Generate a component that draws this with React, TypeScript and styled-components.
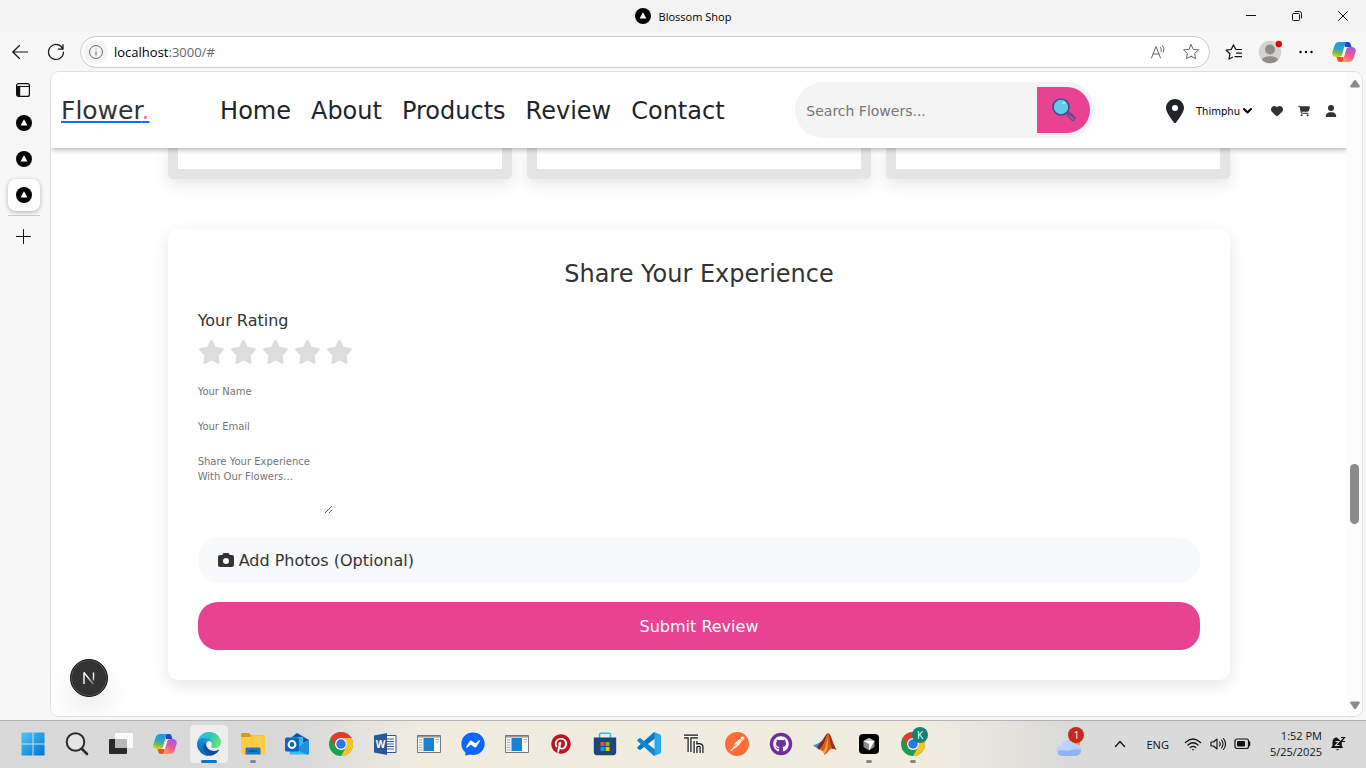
import React from "react";
import styled, { createGlobalStyle, css } from "styled-components";
import { FaPinterest, FaGithub, FaFacebookMessenger } from "react-icons/fa";
import {
  FaStar,
  FaHeart,
  FaCartShopping,
  FaUser,
  FaCamera,
  FaLocationDot,
} from "react-icons/fa6";
import { SiPostman } from "react-icons/si";

const pink = "#e84393";
const ink = "#212529";
const uiFont = `"Open Sans", "Noto Sans", sans-serif`;
const pageFont = `"DejaVu Sans", "Liberation Sans", sans-serif`;

const GlobalStyle = createGlobalStyle`
  *, *::before, *::after { box-sizing: border-box; }
  body { margin: 0; background: #f7f7f7; color: #000; font-family: ${uiFont}; }
  button, input, select, textarea { font: inherit; margin: 0; }
  button { border: 0; padding: 0; background: none; color: inherit; }
  svg { display: block; flex: none; }
`;

/* ---------- window frame ---------- */

const Window = styled.div`
  display: flex;
  flex-direction: column;
  min-height: 100vh;
`;

const TitleBar = styled.header`
  display: grid;
  grid-template-columns: 1fr auto 1fr;
  align-items: center;
  height: 32px;
  background: #f3f3f3;
  font-size: 11px;
`;

const WindowTitle = styled.div`
  display: flex;
  align-items: center;
  gap: 8px;
  grid-column: 2;
`;

const WindowButtons = styled.div`
  display: flex;
  justify-content: flex-end;
`;

const WindowButton = styled.button`
  display: grid;
  place-items: center;
  width: 46px;
  height: 32px;
`;

const Toolbar = styled.div`
  display: flex;
  align-items: center;
  height: 39px;
  padding: 0 2px 0 8px;
`;

const ToolButton = styled.button<{ $w?: number }>`
  display: grid;
  place-items: center;
  position: relative;
  width: ${(p) => p.$w ?? 36}px;
  height: 32px;
`;

const AddressBar = styled.div`
  display: flex;
  align-items: center;
  flex: 1;
  height: 32px;
  margin: 1px 6px 0 0;
  padding: 0 2px 0 3px;
  border: 1px solid #cdcdcd;
  border-radius: 16px;
  background: #fff;
`;

const SiteInfo = styled.button`
  display: grid;
  place-items: center;
  width: 24px;
  height: 24px;
  border-radius: 50%;
  background: #f3f3f3;
`;

const Address = styled.div`
  flex: 1;
  margin-left: 6px;
  font-size: 13px;
  line-height: 20px;
  span { color: #666; }
`;

const Body = styled.div`
  display: flex;
  flex: 1;
  padding: 0 3px 3px 0;
`;

const TabRail = styled.nav`
  display: flex;
  flex-direction: column;
  align-items: center;
  width: 50px;
  padding: 3px 3px 0 0;
`;

const RailTab = styled.button<{ $active?: boolean }>`
  display: grid;
  place-items: center;
  width: 32px;
  height: 32px;
  margin-bottom: 4px;
  border-radius: 8px;
  ${(p) =>
    p.$active &&
    css`
      background: #fff;
      box-shadow: 0 1px 4px rgba(0, 0, 0, 0.3);
    `}
`;

const TabActions = styled(RailTab)`
  width: 34px;
  margin-bottom: 1px;
  padding-right: 2px;
`;

const RailRule = styled.hr`
  width: 32px;
  margin: 0 0 4px;
  border: 0;
  border-top: 1px solid #c8c8c8;
`;

const Viewport = styled.div`
  position: relative;
  display: flex;
  flex: 1;
  overflow: hidden;
  border: 1px solid #e0e0e0;
  border-radius: 9px;
  background: #fff;
`;

const ScrollTrack = styled.div`
  display: flex;
  flex-direction: column;
  align-items: center;
  width: 15px;
  padding: 8px 0 7px;
  background: #fcfcfc;
`;

const ScrollThumb = styled.div`
  width: 9px;
  height: 60px;
  border-radius: 5px;
  background: #8b8b8b;
`;

const ScrollSpace = styled.div<{ $grow: number }>`
  flex: ${(p) => p.$grow} 0 0;
`;

/* ---------- shop page ---------- */

const Page = styled.div`
  flex: 1;
  min-width: 0;
  overflow-x: clip;
  font-family: ${pageFont};
  color: ${ink};
`;

const ShopHeader = styled.header`
  position: relative;
  z-index: 1;
  display: flex;
  align-items: center;
  justify-content: space-between;
  height: 76px;
  padding: 0 10px;
  background: #fff;
  box-shadow: 0 2px 5px rgba(0, 0, 0, 0.28);
`;

const Brand = styled.a`
  padding-top: 2px;
  font-size: 25px;
  line-height: 36px;
  color: #333;
  text-decoration: underline #0d6efd;
  span { color: #ff69b4; }
`;

const MainNav = styled.nav`
  display: flex;
  gap: 20px;
  padding-top: 2px;
  font-size: 24px;
  line-height: 36px;
`;

const NavLink = styled.a`
  color: ${ink};
  text-decoration: none;
`;

const SearchForm = styled.form`
  display: flex;
  width: 300px;
  height: 56px;
  padding: 5px;
  border-radius: 30px;
  background: #f4f4f4;
`;

const SearchInput = styled.input`
  flex: 1;
  min-width: 0;
  padding: 2px 6px 0;
  border: 0;
  background: transparent;
  font-size: 14px;
  &::placeholder { color: #757575; }
`;

const SearchButton = styled.button`
  display: grid;
  place-items: center;
  width: 53px;
  border-radius: 0 24px 24px 0;
  background: ${pink};
`;

const HeaderTools = styled.div`
  display: flex;
  align-items: center;
  padding-top: 2px;
`;

const PlaceSelect = styled.select`
  appearance: none;
  width: 46px;
  margin-left: 12px;
  padding: 0;
  border: 0;
  background: #fff;
  color: #000;
  font-size: 10px;
`;

const IconLinks = styled.div`
  display: flex;
  gap: 15px;
  margin-left: 18px;
`;

const IconLink = styled.a`
  color: #333;
`;

const PinIcon = styled(FaLocationDot)`
  width: 18px;
  height: 24px;
`;

const Content = styled.main`
  padding: 0 9% 30px;
`;

const ReviewCards = styled.div`
  display: grid;
  grid-template-columns: repeat(3, 1fr);
  gap: 15px;
  margin-bottom: 50px;
`;

const ReviewCard = styled.article`
  height: 31px;
  border: 10px solid #e5e5e5;
  border-top: 0;
  border-radius: 0 0 5px 5px;
  box-shadow: 0 5px 15px rgba(0, 0, 0, 0.1);
`;

const ReviewForm = styled.form`
  display: flex;
  flex-direction: column;
  align-items: flex-start;
  padding: 30px;
  border-radius: 10px;
  background: #fff;
  box-shadow: 0 5px 15px rgba(0, 0, 0, 0.1);
`;

const FormTitle = styled.h3`
  align-self: center;
  margin: 0 0 18px;
  font-size: 24px;
  font-weight: 400;
  line-height: 31px;
  color: #333;
`;

const Rating = styled.fieldset`
  margin: 0 0 20px;
  padding: 0;
  border: 0;
  legend {
    margin-bottom: 6px;
    padding: 0;
    font-size: 16px;
    line-height: 26px;
    color: #333;
  }
`;

const Stars = styled.div`
  display: flex;
  gap: 5px;
  color: #ddd;
`;

const StarIcon = styled(FaStar)`
  width: 27px;
  height: 24px;
`;

const Hidden = styled.input`
  appearance: none;
  position: absolute;
  width: 1px;
  height: 1px;
  margin: 0;
  opacity: 0;
`;

const fieldText = css`
  padding: 0;
  border: 0;
  background: transparent;
  font-size: 10px;
  line-height: 15px;
  &::placeholder { color: #757575; }
`;

const Field = styled.input`
  ${fieldText}
  width: 136px;
  height: 15px;
  margin-bottom: 20px;
`;

const MessageField = styled.textarea`
  ${fieldText}
  width: 135px;
  height: 60px;
  margin-bottom: 24px;
`;

const PhotoPicker = styled.label`
  display: flex;
  align-items: center;
  gap: 5px;
  width: 100%;
  height: 44px;
  margin-bottom: 20px;
  padding: 0 20px;
  border-radius: 20px;
  background: #f8f9fb;
  color: #333;
  font-size: 16px;
`;

const SubmitButton = styled.button`
  width: 100%;
  height: 48px;
  border-radius: 20px;
  background: ${pink};
  color: #fff;
  font-size: 16px;
`;

const DevBadge = styled.button`
  position: absolute;
  left: 19px;
  bottom: 19px;
  display: grid;
  place-items: center;
  width: 38px;
  height: 38px;
  border: 1px solid #111;
  border-radius: 50%;
  background: #333;
  box-shadow: inset 0 0 0 1px #555, 0 16px 32px -8px rgba(0, 0, 0, 0.24);
`;

/* ---------- taskbar ---------- */

const Taskbar = styled.footer`
  display: flex;
  align-items: center;
  justify-content: space-between;
  height: 48px;
  padding: 0 20px 0 14px;
  box-shadow: inset 0 1px #b4b4b4;
  background: linear-gradient(
    90deg,
    #d9d9d9 0 22%,
    #f0ece0 31%,
    #f0ece0 68%,
    #dadada 78%
  );
`;

const AppRow = styled.div`
  display: flex;
  gap: 6px;
`;

const AppButton = styled.button<{ $state?: "active" | "running" }>`
  display: grid;
  place-items: center;
  position: relative;
  width: 38px;
  height: 38px;
  border-radius: 4px;
  background: ${(p) => (p.$state === "active" ? "#eeeeee" : "none")};
  &::after {
    content: ${(p) => (p.$state ? '""' : "none")};
    position: absolute;
    bottom: 0;
    width: ${(p) => (p.$state === "active" ? 16 : 6)}px;
    height: 3px;
    border-radius: 2px;
    background: ${(p) => (p.$state === "active" ? "#0078d4" : "#858585")};
  }
`;

const Badge = styled.span<{ $color: string }>`
  position: absolute;
  top: 2px;
  right: 4px;
  width: 16px;
  height: 16px;
  border-radius: 50%;
  background: ${(p) => p.$color};
  color: #fff;
  font-size: 10px;
  line-height: 16px;
  text-align: center;
`;

const WeatherButton = styled(AppButton)`
  margin-right: 18px;
`;

const Tray = styled.div`
  display: flex;
  align-items: center;
  gap: 8px;
  font-size: 11px;
  color: #111;
`;

const TrayText = styled.span`
  margin: 0 7px 0 12px;
`;

const Clock = styled.time`
  margin-left: 10px;
  line-height: 16px;
  text-align: right;
`;

/* ---------- drawings ---------- */

const Favicon = () => (
  <svg width="16" height="16" viewBox="0 0 16 16">
    <circle cx="8" cy="8" r="8" fill="#000" />
    <path d="M8 4.2 11.4 10.6H4.6z" fill="#fff" />
  </svg>
);

const Line: React.FC<{ w?: number; h?: number; d: string; color?: string; sw?: number }> = ({
  w = 16,
  h = 16,
  d,
  color = "#111",
  sw = 1,
}) => (
  <svg width={w} height={h} viewBox={`0 0 ${w} ${h}`} fill="none" stroke={color} strokeWidth={sw} strokeLinecap="round" strokeLinejoin="round">
    <path d={d} />
  </svg>
);

const Copilot = () => (
  <svg width="24" height="24" viewBox="0 0 24 24">
    <defs>
      <linearGradient id="cpA" x1="0.4" y1="0" x2="0.2" y2="1">
        <stop offset="0" stopColor="#1b9bf0" />
        <stop offset="0.45" stopColor="#2fa8c0" />
        <stop offset="0.7" stopColor="#6cc04a" />
        <stop offset="1" stopColor="#f8cf12" />
      </linearGradient>
      <linearGradient id="cpB" x1="0.8" y1="0" x2="0.3" y2="1">
        <stop offset="0" stopColor="#9a5cf0" />
        <stop offset="0.5" stopColor="#f0539a" />
        <stop offset="1" stopColor="#ff9a62" />
      </linearGradient>
    </defs>
    <path d="M11 2h5c1.500 0 2.200.8 2.600 2.200L19.500 7H13z" fill="#1846c4" />
    <path d="M13 22H8c-1.500 0-2.200-.8-2.600-2.200L4.500 17H11z" fill="#f04a28" />
    <path d="M7.500 2h7.200c-1 .5-1.500 1.300-1.900 2.800L10 14.500C9.400 16.300 8.400 17 6.800 17H4.200C1 17-.4 15 .6 11.500L2.500 5.500C3.300 3 5 2 7.500 2z" fill="url(#cpA)" />
    <path d="M16.500 22H9.300c1-.5 1.500-1.300 1.900-2.800L14 9.500C14.600 7.700 15.600 7 17.200 7h2.600c3.200 0 4.600 2 3.600 5.500l-1.900 6c-.8 2.500-2.500 3.500-5 3.500z" fill="url(#cpB)" />
    <path d="M13.300 8.300c.6-1 1.400-1.300 2.700-1.300h1.200c-1.600 0-2.600.7-3.200 2.500l-2.200 7.300c-.4.100-.8.200-1.400.2H8.800c.9-.4 1.400-1.200 1.800-2.500z" fill="#fff" />
  </svg>
);

const Edge = () => (
  <svg width="24" height="24" viewBox="0 0 256 256">
    <defs>
      <linearGradient id="edA" x1="0" x2="1">
        <stop offset="0" stopColor="#0c59a4" />
        <stop offset="1" stopColor="#114a8b" />
      </linearGradient>
      <linearGradient id="edB" x1="0.8" y1="0.2" x2="0.3" y2="1">
        <stop offset="0" stopColor="#1b9de2" />
        <stop offset="1" stopColor="#0a63b8" />
      </linearGradient>
      <linearGradient id="edC" x1="0" y1="0.3" x2="1" y2="0.6">
        <stop offset="0" stopColor="#35c1f1" />
        <stop offset="0.5" stopColor="#2fc2b8" />
        <stop offset="1" stopColor="#66eb6e" />
      </linearGradient>
    </defs>
    <path fill="url(#edA)" d="M231 190.500c-3.400 1.800-6.900 3.400-10.500 4.700a101.500 101.500 0 0 1-35.600 6.400c-47 0-87.900-32.300-87.900-73.800 0-11.300 6.300-21.700 16-27.300-42.500 1.800-53.400 46.100-53.400 72 0 73.400 67.600 80.800 82.200 80.800 7.900 0 19.700-2.300 26.800-4.500l1.300-.4a128.300 128.300 0 0 0 66.600-52.800 4 4 0 0 0-5.500-5.100z" />
    <path fill="url(#edB)" d="M105.700 241.400a79.200 79.200 0 0 1-22.700-21.300 80.700 80.700 0 0 1 29.500-120c3.100-1.500 8.500-4.100 15.600-4a32.400 32.400 0 0 1 25.700 13 31.900 31.900 0 0 1 6.300 18.700c0-.2 24.500-79.600-80-79.600-43.900 0-80 41.600-80 78.200a130.200 130.200 0 0 0 12.100 56 128 128 0 0 0 156.400 67 75.500 75.500 0 0 1-62.800-8z" />
    <path fill="url(#edC)" d="M152.300 148.900c-.8 1-3.300 2.500-3.300 5.700 0 2.600 1.700 5.200 4.800 7.300 14.300 10 41.400 8.600 41.500 8.600 10.700 0 21.100-2.900 30.300-8.300a61.400 61.400 0 0 0 30.400-52.900c.3-22.400-8-37.300-11.300-43.900C223.500 23.900 177.700 0 128 0A128 128 0 0 0 0 126.200c.5-36.500 36.800-66 80-66 3.500 0 23.500.3 42 10.100 16.300 8.600 24.900 18.900 30.800 29.200 6.200 10.700 7.300 24.100 7.300 29.500 0 5.300-2.700 13.300-7.800 19.900z" />
  </svg>
);

const Chrome = () => (
  <svg width="24" height="24" viewBox="0 0 48 48">
    <circle cx="24" cy="24" r="24" fill="#1e9e4a" />
    <path d="M3.200 12A24 24 0 0 1 44.800 12H24A12 12 0 0 0 13.600 30z" fill="#e33b2e" />
    <path d="M44.800 12A24 24 0 0 1 24 48L34.400 30A12 12 0 0 0 24 12z" fill="#fcc31e" />
    <circle cx="24" cy="24" r="12" fill="#fff" />
    <circle cx="24" cy="24" r="9.500" fill="#2a78e8" />
  </svg>
);

const WindowsLogo = () => (
  <svg width="24" height="24" viewBox="0 0 24 24">
    <defs>
      <linearGradient id="winG" x1="0" y1="0" x2="24" y2="24" gradientUnits="userSpaceOnUse">
        <stop offset="0" stopColor="#4cc9fb" />
        <stop offset="1" stopColor="#0072cf" />
      </linearGradient>
    </defs>
    <path d="M.5.500h11v11H.500zM12.500.500h11v11h-11zM.500 12.500h11v11H.500zM12.500 12.500h11v11h-11z" fill="url(#winG)" />
  </svg>
);

const SearchGlyph = () => (
  <svg width="24" height="24" viewBox="0 0 24 24" fill="none" stroke="#2b2b2b">
    <circle cx="10.500" cy="10" r="8.800" strokeWidth="2" fill="#e4e4e4" />
    <path d="m17 17 5 5" strokeWidth="2.600" strokeLinecap="round" />
  </svg>
);

const TaskView = () => (
  <svg width="24" height="24" viewBox="0 0 24 24">
    <rect x="0" y="7" width="18" height="15" rx="1" fill="#2a2a2a" />
    <rect x="6" y="1" width="18" height="15" rx="1" fill="#fafafa" />
    <path d="M6 7h12v9H6z" fill="#b9b9b9" />
  </svg>
);

const Folder = () => (
  <svg width="26" height="24" viewBox="0 0 26 24">
    <path d="M1 3c0-1 .500-2 1.500-2H9l2 2.500H23c1 0 2 .500 2 2V8H1z" fill="#d99a12" />
    <path d="M1 5h9l1.500-1.500H25V21c0 .800-.600 1.500-1.500 1.500h-21C1.600 22.500 1 21.800 1 21z" fill="#fdcb45" />
    <path d="M5.500 22.500V17c0-1 .700-1.500 1.500-1.500h12c.800 0 1.500.500 1.500 1.500v5.500z" fill="#1779c8" />
    <path d="M8.500 19h9" stroke="#0d4f8d" strokeWidth="1.500" />
  </svg>
);

const Outlook = () => (
  <svg width="26" height="24" viewBox="0 0 26 24">
    <path d="M4 8 13 1l12 7v6H4z" fill="#0f4fa8" />
    <path d="M7 5h12v9H7z" fill="#35b4f0" />
    <path d="M25 8v13c0 1-.600 1.500-1.500 1.500H7c-1 0-1.500-.500-1.500-1.500v-4z" fill="#34bff0" />
    <path d="m25 8-14 9 12 5.500c1 0 2-.500 2-1.500z" fill="#1f8fe0" />
    <rect x="1" y="5.500" width="14" height="14" rx="1.500" fill="#0a64c0" />
    <circle cx="8" cy="12.500" r="3.400" fill="none" stroke="#fff" strokeWidth="2" />
  </svg>
);

const Word = () => (
  <svg width="24" height="24" viewBox="0 0 24 24">
    <path d="M12 3.500h11v17H12z" fill="#fff" stroke="#2b579a" />
    <path d="M14 7h7M14 9.500h7M14 12h7M14 14.500h7M14 17h7" stroke="#2b579a" strokeWidth="1.200" />
    <path d="M1 3.500 14 1v22L1 20.500z" fill="#2b579a" />
    <text x="7.500" y="16" fill="#fff" fontSize="10" fontWeight="700" textAnchor="middle" fontFamily="Open Sans, sans-serif">W</text>
  </svg>
);

const DocWindow = () => (
  <svg width="24" height="20" viewBox="0 0 24 20">
    <path d="M.5 1.500h23v17H.500z" fill="#fafafa" stroke="#777" />
    <path d="M1 2h22v1.500H1z" fill="#999" />
    <path d="M2 6h3.500M2 8.500h3.500M2 11h3.500M2 13.500h3.500M2 16h3.500M18.500 5.500h3.500M18.500 8h3.500" stroke="#aaa" />
    <path d="M6.500 4H17v13H6.500z" fill="#1583d6" />
  </svg>
);

const Messenger = () => (
  <svg width="24" height="24" viewBox="0 0 24 24">
    <circle cx="12" cy="11.500" r="9" fill="#fff" />
    <FaFacebookMessenger size={24} color="#0a66ff" />
  </svg>
);

const Pinterest = () => (
  <svg width="24" height="24" viewBox="0 0 24 24">
    <circle cx="12" cy="12" r="9" fill="#fff" />
    <FaPinterest x={2} y={2} size={20} color="#bd1421" />
  </svg>
);

const Store = () => (
  <svg width="24" height="24" viewBox="0 0 24 24">
    <path d="M6.500 6V2.500c0-.800.400-1.200 1.200-1.200h8.600c.800 0 1.200.400 1.200 1.200V6" fill="none" stroke="#35b9ef" strokeWidth="1.600" />
    <path d="M.8 5.500h22.400V20c0 2-1 3.200-3 3.200H3.800c-2 0-3-1.200-3-3.200z" fill="#1c4578" />
    <path d="M7.500 10h4v4h-4z" fill="#f25022" />
    <path d="M12.500 10h4v4h-4z" fill="#7fba00" />
    <path d="M7.500 15h4v4h-4z" fill="#00a4ef" />
    <path d="M12.500 15h4v4h-4z" fill="#ffb900" />
  </svg>
);

const VsCode = () => (
  <svg width="24" height="24" viewBox="0 0 24 24">
    <path d="M18 0v6.500L3.500 17.800c-.400.300-.800.300-1.200 0L.500 16.200c-.400-.400-.400-.900 0-1.300L16.500.500z" fill="#0b77bf" />
    <path d="M18 24v-6.500L3.500 6.200c-.400-.300-.800-.300-1.200 0L.500 7.800c-.400.400-.400.900 0 1.300l16 14.400z" fill="#0f89cf" />
    <path d="M17.500 0 23 2.500c.600.300 1 .800 1 1.500v16c0 .700-.400 1.200-1 1.500L17.500 24z" fill="#2aa5ee" />
  </svg>
);

const Thonny = () => (
  <svg width="24" height="24" viewBox="0 0 24 24" fill="none" strokeLinejoin="round">
    <g stroke="#111" strokeWidth="4">
      <path d="M3 4.500h14M8.500 4.500V20M14.500 9v12M14.500 14.500c1-2 6-2 6 .5v6" />
    </g>
    <g stroke="#fff" strokeWidth="1.600">
      <path d="M3 4.500h14M8.500 4.500V20M14.500 9v12M14.500 14.500c1-2 6-2 6 .5v6" />
    </g>
  </svg>
);

const Postman = () => (
  <svg width="24" height="24" viewBox="0 0 24 24">
    <circle cx="12" cy="12" r="11" fill="#fff" />
    <SiPostman size={24} color="#ff6c37" />
  </svg>
);

const GithubDesktop = () => (
  <svg width="24" height="24" viewBox="0 0 24 24">
    <circle cx="12" cy="12" r="11.200" fill="#6e2f9f" />
    <FaGithub x={4} y={4} size={16} color="#fff" />
  </svg>
);

const Matlab = () => (
  <svg width="26" height="24" viewBox="0 0 26 24">
    <path d="m1 13.500 7-3 3 3-4 4z" fill="#4a8fc4" />
    <path d="M8 10.500c3-1 5-8.500 8-9.500-1 5-3 12-9 16.500l-2-2z" fill="#7a2a24" />
    <path d="M16 1c3 0 5 11 8.500 17-3-2-5-2-7 0-1.500 1.500-3 4-5 5-.500-3-2.500-5-5.500-5.500C13 14 13.500 3 16 1z" fill="#dd5a1c" />
    <path d="M15.500 4c-.500 6-1.500 12-4.500 15.500l1.500 2.500c3-3 4-12 3-18z" fill="#f7a83a" />
    <path d="M16.500 1.500c2 1 4.500 11 8 16.500-1.500-1-3-1.500-4-1.300C18.500 13 17.500 6 16.500 1.500z" fill="#9c2c18" />
  </svg>
);

const Cursor = () => (
  <svg width="20" height="20" viewBox="0 0 20 20">
    <rect width="20" height="20" rx="4" fill="#050505" />
    <path d="m10 4 5.500 3v6L10 16.500 4.500 13V7z" fill="#8c8c8c" />
    <path d="M4.500 7h11L10 16.500V10z" fill="#fff" />
    <path d="m10 4 5.500 3h-11z" fill="#c9c9c9" />
  </svg>
);

const Magnifier = () => (
  <svg width="24" height="24" viewBox="0 0 24 24">
    <path d="m15 15.500 2.500-2 6 5.500c.500.500.500 1.200 0 1.900l-1.800 2.100c-.500.600-1.300.600-1.900 0L15 18z" fill="#71498c" />
    <path d="m17 17.500 4.500 4" stroke="#9160a5" strokeWidth="1.600" />
    <circle cx="9" cy="9" r="8" fill="#62cbea" stroke="#3c5096" strokeWidth="1.700" />
    <ellipse cx="11.800" cy="5" rx="1.700" ry="1.300" fill="#a9e5f5" />
  </svg>
);

const Weather = () => (
  <svg width="26" height="26" viewBox="0 0 26 26">
    <circle cx="18" cy="12" r="6" fill="#f08a24" />
    <path d="M6 25a5 5 0 0 1-.8-10A7.500 7.500 0 0 1 19 13a6 6 0 0 1 1 12z" fill="#b9d2f9" />
    <path d="M6 25a5 5 0 0 1-4.500-4.500c5-3 8 0 12-1s8-2 11.500-.5A6 6 0 0 1 20 25z" fill="#8fb4f3" />
  </svg>
);

const starPath =
  "M9 1.500 11.200 6.300 16.500 6.900 12.600 10.500 13.600 15.700 9 13.100 4.400 15.700 5.400 10.500 1.500 6.900 6.800 6.300z";

const apps: { name: string; icon: React.ReactNode; state?: "active" | "running"; badge?: string }[] = [
  { name: "Start", icon: <WindowsLogo /> },
  { name: "Search", icon: <SearchGlyph /> },
  { name: "Task View", icon: <TaskView /> },
  { name: "Copilot", icon: <Copilot /> },
  { name: "Edge", icon: <Edge />, state: "active" },
  { name: "File Explorer", icon: <Folder />, state: "running" },
  { name: "Outlook", icon: <Outlook /> },
  { name: "Chrome", icon: <Chrome /> },
  { name: "Word", icon: <Word /> },
  { name: "Document", icon: <DocWindow /> },
  { name: "Messenger", icon: <Messenger /> },
  { name: "Document 2", icon: <DocWindow /> },
  { name: "Pinterest", icon: <Pinterest /> },
  { name: "Store", icon: <Store /> },
  { name: "VS Code", icon: <VsCode /> },
  { name: "Thonny", icon: <Thonny /> },
  { name: "Postman", icon: <Postman /> },
  { name: "GitHub Desktop", icon: <GithubDesktop /> },
  { name: "MATLAB", icon: <Matlab /> },
  { name: "Cursor", icon: <Cursor />, state: "running" },
  { name: "Chrome profile", icon: <Chrome />, state: "running", badge: "K" },
];

/* ---------- sections ---------- */

const BrowserChrome = () => (
  <>
    <TitleBar>
      <WindowTitle>
        <Favicon />
        Blossom Shop
      </WindowTitle>
      <WindowButtons>
        <WindowButton aria-label="Minimize">
          <Line w={10} h={10} d="M0 4.500h10" />
        </WindowButton>
        <WindowButton aria-label="Restore">
          <Line w={10} h={10} d="M1.500 2.500h5a1 1 0 0 1 1 1v5a1 1 0 0 1-1 1h-5a1 1 0 0 1-1-1v-5a1 1 0 0 1 1-1zM3 .500h4.500a2 2 0 0 1 2 2V7" />
        </WindowButton>
        <WindowButton aria-label="Close">
          <Line w={10} h={10} d="m.5.500 9 9M9.500.500l-9 9" />
        </WindowButton>
      </WindowButtons>
    </TitleBar>
    <Toolbar>
      <ToolButton aria-label="Back" $w={24}>
        <Line w={16} h={14} d="M15.500 7H.800M7.500.500.800 7l6.700 6.500" sw={1.2} />
      </ToolButton>
      <ToolButton aria-label="Refresh" $w={48}>
        <Line w={18} h={18} d="M15.800 5.800A7.500 7.500 0 1 0 16.500 9M16 1.500v4.700h-4.700" sw={1.2} />
      </ToolButton>
      <AddressBar>
        <SiteInfo aria-label="Site information">
          <Line d="M8 1.500a6.500 6.500 0 1 1 0 13 6.500 6.500 0 0 1 0-13zM8 7.500V11M8 5v.100" color="#666" />
        </SiteInfo>
        <Address>
          localhost<span>:3000/#</span>
        </Address>
        <ToolButton aria-label="Read aloud" $w={32}>
          <Line w={18} h={18} d="M1.500 15 6 3.500 10.500 15M3 11h6M10.500 4.500q1.500 1.500.5 4M12.500 2.500q2.500 2.500 1 6.500" color="#666" />
        </ToolButton>
        <ToolButton aria-label="Add to favorites" $w={32}>
          <Line w={18} h={18} d={starPath} color="#666" />
        </ToolButton>
      </AddressBar>
      <ToolButton aria-label="Favorites">
        <Line w={18} h={18} d="M7.500 14.200 4 16l.9-5.200L1.200 7.200l5-.7L8.500 1.700l2.300 4.800h5.700M11.500 10.200h5M10 13.700h6.500" sw={1.2} />
      </ToolButton>
      <ToolButton aria-label="Profile">
        <svg width="24" height="24" viewBox="0 0 24 24">
          <circle cx="12" cy="12" r="11.300" fill="#d5d3d0" />
          <circle cx="12" cy="9.500" r="5" fill="#8f8c89" />
          <path d="M4 20c1-5 15-5 16 0a11.300 11.300 0 0 1-16 0z" fill="#8f8c89" />
          <circle cx="20.800" cy="4" r="3.200" fill="#e60000" />
        </svg>
      </ToolButton>
      <ToolButton aria-label="Settings and more">
        <svg width="14" height="4" viewBox="0 0 14 4">
          <circle cx="1.500" cy="2" r="1.200" />
          <circle cx="7" cy="2" r="1.200" />
          <circle cx="12.500" cy="2" r="1.200" />
        </svg>
      </ToolButton>
      <ToolButton aria-label="Copilot" $w={40}>
        <Copilot />
      </ToolButton>
    </Toolbar>
  </>
);

const Rail = () => (
  <TabRail aria-label="Tabs">
    <TabActions aria-label="Tab actions">
      <svg width="14" height="14" viewBox="0 0 14 14">
        <rect x="0.600" y="0.600" width="12.800" height="12.800" rx="2" fill="none" stroke="#111" strokeWidth="1.200" />
        <path d="M.600 3.500h12.800" stroke="#111" />
        <path d="M1 3.500h3.200V13H2a1 1 0 0 1-1-1z" fill="#111" />
      </svg>
    </TabActions>
    <RailTab aria-label="Tab 1"><Favicon /></RailTab>
    <RailTab aria-label="Tab 2"><Favicon /></RailTab>
    <RailTab aria-label="Tab 3" $active><Favicon /></RailTab>
    <RailRule />
    <RailTab aria-label="New tab">
      <Line w={15} h={15} d="M7.500.500v14M.500 7.500h14" />
    </RailTab>
  </TabRail>
);

const ShopPage = () => (
  <Page>
    <ShopHeader>
      <Brand href="#">Flower<span>.</span></Brand>
      <MainNav>
        {["Home", "About", "Products", "Review", "Contact"].map((item) => (
          <NavLink key={item} href="#">{item}</NavLink>
        ))}
      </MainNav>
      <SearchForm>
        <SearchInput type="text" placeholder="Search Flowers..." aria-label="Search flowers" />
        <SearchButton type="button" aria-label="Search"><Magnifier /></SearchButton>
      </SearchForm>
      <HeaderTools>
        <PinIcon />
        <PlaceSelect aria-label="Location" defaultValue="Thimphu">
          <option>Thimphu</option>
        </PlaceSelect>
        <Line w={11} h={8} d="m2 2 3.500 3.500L9 2" color="#000" sw={2} />
        <IconLinks>
          <IconLink href="#" aria-label="Wishlist"><FaHeart size={12} /></IconLink>
          <IconLink href="#" aria-label="Cart"><FaCartShopping size={12} /></IconLink>
          <IconLink href="#" aria-label="Account"><FaUser size={12} /></IconLink>
        </IconLinks>
      </HeaderTools>
    </ShopHeader>
    <Content>
      <ReviewCards>
        <ReviewCard />
        <ReviewCard />
        <ReviewCard />
      </ReviewCards>
      <ReviewForm>
        <FormTitle>Share Your Experience</FormTitle>
        <Rating>
          <legend>Your Rating</legend>
          <Stars>
            {[1, 2, 3, 4, 5].map((n) => (
              <label key={n}>
                <Hidden type="radio" name="rating" value={n} aria-label={`${n} stars`} />
                <StarIcon />
              </label>
            ))}
          </Stars>
        </Rating>
        <Field type="text" placeholder="Your Name" aria-label="Your Name" />
        <Field type="email" placeholder="Your Email" aria-label="Your Email" />
        <MessageField placeholder="Share Your Experience With Our Flowers..." aria-label="Your experience" />
        <PhotoPicker>
          <Hidden type="file" multiple />
          <FaCamera size={16} />
          Add Photos (Optional)
        </PhotoPicker>
        <SubmitButton type="button">Submit Review</SubmitButton>
      </ReviewForm>
    </Content>
  </Page>
);

const App = () => (
  <Window>
    <GlobalStyle />
    <BrowserChrome />
    <Body>
      <Rail />
      <Viewport>
        <ShopPage />
        <ScrollTrack aria-hidden="true">
          <svg width="10" height="8" viewBox="0 0 10 8"><path d="M5 0c.400 0 .700.200 1 .600l3.500 5c.600 1 .300 1.900-.800 1.900H1.300c-1.100 0-1.400-.900-.800-1.900l3.500-5C4.300.200 4.600 0 5 0z" fill="#8b8b8b" /></svg>
          <ScrollSpace $grow={376} />
          <ScrollThumb />
          <ScrollSpace $grow={177} />
          <svg width="10" height="8" viewBox="0 0 10 8"><path d="M5 8c-.400 0-.700-.200-1-.600l-3.500-5C-.100 1.400.200.500 1.300.500h7.400c1.100 0 1.400.900.800 1.900l-3.500 5c-.300.400-.600.600-1 .600z" fill="#8b8b8b" /></svg>
        </ScrollTrack>
        <DevBadge aria-label="Developer tools">
          <svg width="14" height="14" viewBox="0 0 14 14" fill="none" strokeWidth="1.400">
            <defs>
              <linearGradient id="nFade" x1="0" y1="0" x2="0" y2="14" gradientUnits="userSpaceOnUse">
                <stop offset="0.400" stopColor="#fff" />
                <stop offset="1" stopColor="#fff" stopOpacity="0.200" />
              </linearGradient>
            </defs>
            <path d="M2 13V1.500" stroke="#fff" />
            <path d="m2 1.500 9.500 12M11.500 1.500l.010 8" stroke="url(#nFade)" />
          </svg>
        </DevBadge>
      </Viewport>
    </Body>
    <Taskbar>
      <AppRow>
        {apps.map((app) => (
          <AppButton key={app.name} aria-label={app.name} $state={app.state}>
            {app.icon}
            {app.badge && <Badge $color="#0b8575">{app.badge}</Badge>}
          </AppButton>
        ))}
      </AppRow>
      <Tray>
        <WeatherButton aria-label="Weather">
          <Weather />
          <Badge $color="#c42b1c">1</Badge>
        </WeatherButton>
        <Line w={12} h={8} d="m1.500 6.500 4.500-5 4.500 5" sw={1.3} />
        <TrayText>ENG</TrayText>
        <Line w={18} h={16} d="M1.500 6.500q7.500-7 15 0M4 9q5-4.500 10 0M6.300 11.500q2.700-2.300 5.400 0M8.700 13.700h.600" sw={1.3} />
        <Line d="M1 6v4h2.500L7 13V3L3.500 6zM9.500 6q1.500 2 0 4M11.500 4q3 4 0 8M13.500 2.500q4 5.500 0 11" sw={1.1} />
        <svg width="18" height="12" viewBox="0 0 18 12">
          <rect x="1" y="1" width="13.500" height="9.500" rx="2" fill="none" stroke="#111" strokeWidth="1.200" />
          <rect x="3" y="3" width="8" height="5.500" rx="1" fill="#111" />
          <path d="M15.500 4v3.500" stroke="#111" strokeWidth="1.600" strokeLinecap="round" />
        </svg>
        <Clock>
          1:52 PM
          <br />
          5/25/2025
        </Clock>
        <svg width="16" height="16" viewBox="0 0 16 16">
          <path d="M7 1.500C4 1.500 2.500 3.500 2.500 6v3.500L1 12h12l-1.200-2.500V6z" fill="#111" />
          <path d="M5.500 13.200h4q-2 2.200-4 0z" fill="#111" />
          <path d="M5.500 5.500h3.500L5.500 9.500H9.500" fill="none" stroke="#ddd" strokeWidth="1.100" />
          <path d="M11 1.500h3.500l-3.500 4h4" fill="none" stroke="#111" strokeWidth="1.200" />
        </svg>
      </Tray>
    </Taskbar>
  </Window>
);

export default App;
